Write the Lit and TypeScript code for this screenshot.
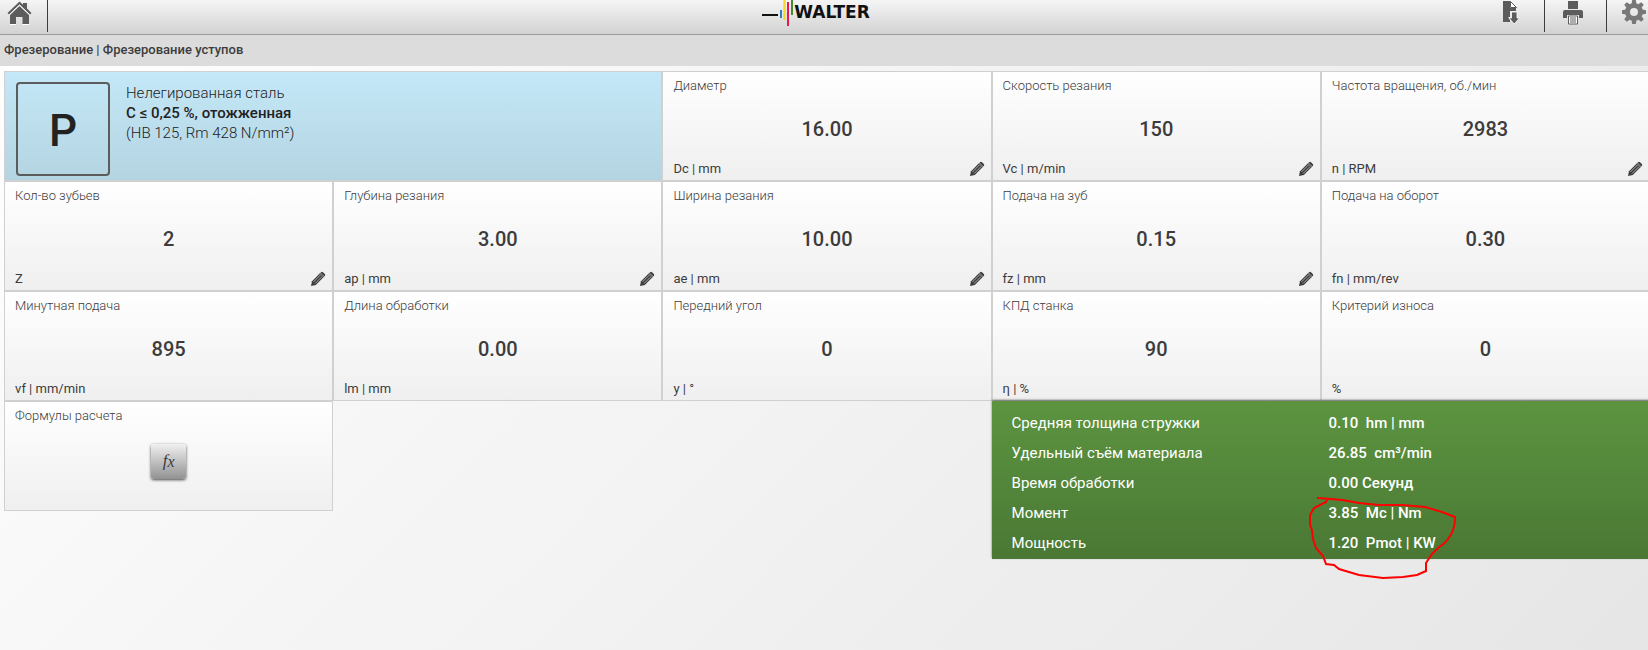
import { LitElement, html, svg, css, nothing } from "lit";
import { customElement, property } from "lit/decorators.js";

interface Param {
  id: string;
  label: string;
  value: string;
  unit: string;
  editable: boolean;
}

const params: Param[] = [
  { id: "dc", label: "Диаметр", value: "16.00", unit: "Dc | mm", editable: true },
  { id: "vc", label: "Скорость резания", value: "150", unit: "Vc | m/min", editable: true },
  { id: "n", label: "Частота вращения, об./мин", value: "2983", unit: "n | RPM", editable: true },
  { id: "z", label: "Кол-во зубьев", value: "2", unit: "Z", editable: true },
  { id: "ap", label: "Глубина резания", value: "3.00", unit: "ap | mm", editable: true },
  { id: "ae", label: "Ширина резания", value: "10.00", unit: "ae | mm", editable: true },
  { id: "fz", label: "Подача на зуб", value: "0.15", unit: "fz | mm", editable: true },
  { id: "fn", label: "Подача на оборот", value: "0.30", unit: "fn | mm/rev", editable: false },
  { id: "vf", label: "Минутная подача", value: "895", unit: "vf | mm/min", editable: false },
  { id: "lm", label: "Длина обработки", value: "0.00", unit: "lm | mm", editable: false },
  { id: "y", label: "Передний угол", value: "0", unit: "y | °", editable: false },
  { id: "eta", label: "КПД станка", value: "90", unit: "η | %", editable: false },
  { id: "wear", label: "Критерий износа", value: "0", unit: "%", editable: false },
];

const results: [string, string, string][] = [
  ["Средняя толщина стружки", "0.10", "\u00a0hm | mm"],
  ["Удельный съём материала", "26.85", "\u00a0cm³/min"],
  ["Время обработки", "0.00", "Секунд"],
  ["Момент", "3.85", "\u00a0Mc | Nm"],
  ["Мощность", "1.20", "\u00a0Pmot | KW"],
];

const pencil = svg`<svg width="16" height="16" viewBox="0 0 16 16" aria-hidden="true">
  <path d="M1 15 L2 10.2 L10.2 2 L14 5.8 L5.8 14 Z" fill="#3c3c3c"/>
  <path d="M11 1.2 Q12 .3 13 1.2 L14.8 3 Q15.7 4 14.8 5 L14.3 5.5 L10.5 1.7 Z" fill="#3c3c3c"/>
  <path d="M3.4 11 L10.4 4 M5 12.600 L12 5.600" stroke="#c8c8c8" stroke-width=".8"/>
  <path d="M9.6 2.8 L13.2 6.4" stroke="#a0a0a0" stroke-width=".6"/>
</svg>`;

@customElement("param-tile")
export class ParamTile extends LitElement {
  @property({ attribute: false }) param!: Param;

  static styles = css`
    :host {
      display: flex;
      flex-direction: column;
      box-sizing: border-box;
      height: 110px;
      padding: 5px 6px 2px 10px;
      border: 1px solid #d0d0d0;
      background: linear-gradient(#ffffff, #efefef);
      color: #3c3c3c;
    }
    .label {
      font-size: 13px;
      line-height: 18px;
      font-weight: 300;
    }
    .value {
      margin: 22px 4px 19px 0;
      font-size: 20px;
      line-height: 24px;
      font-weight: 500;
      text-align: center;
    }
    .foot {
      display: flex;
      justify-content: space-between;
      align-items: center;
      font-size: 13px;
      line-height: 18px;
    }
    .edit {
      display: flex;
      padding: 0;
      border: 0;
      background: none;
      cursor: pointer;
    }
  `;

  render() {
    const p = this.param;
    return html`
      <label class="label" for=${p.id}>${p.label}</label>
      <output class="value" id=${p.id}>${p.value}</output>
      <div class="foot">
        <span>${p.unit}</span>
        ${p.editable
          ? html`<button class="edit" type="button" aria-label=${p.label}>${pencil}</button>`
          : nothing}
      </div>
    `;
  }
}

@customElement("app-root")
export class AppRoot extends LitElement {
  static styles = css`
    :host {
      display: block;
      min-height: 100vh;
      overflow: hidden;
      background: linear-gradient(135deg, #ffffff, #e6e6e6);
      font-family: Roboto, "Noto Sans", sans-serif;
      color: #3c3c3c;
    }
    .top {
      display: grid;
      grid-template-columns: 1fr auto 1fr;
      height: 34px;
      border-bottom: 1px solid #999b99;
      background: linear-gradient(#f5f5f5, #d2d2d2);
    }
    .nav {
      display: flex;
      align-items: flex-start;
    }
    .tools {
      display: flex;
      justify-content: flex-end;
      align-items: flex-start;
      margin-right: -19px;
    }
    .tool {
      box-sizing: border-box;
      display: flex;
      justify-content: center;
      width: 62px;
      height: 32px;
      padding: 0 6px 0 0;
      border: 0;
      border-right: 1px solid #3c3c3c;
      background: none;
      cursor: pointer;
    }
    .home {
      width: 48px;
      padding-right: 10px;
    }
    .last {
      width: 60px;
      border-right: 0;
    }
    .logo {
      display: flex;
      align-items: flex-start;
      padding-right: 16px;
    }
    .word {
      font: bold 17px/24px "DejaVu Sans", sans-serif;
      color: #111111;
    }
    .crumbs {
      height: 31px;
      padding-left: 4px;
      background: #dcdcdc;
      font-size: 13px;
      line-height: 29px;
      font-weight: 500;
    }
    .grid {
      display: grid;
      grid-template-columns: repeat(5, 1fr);
      margin: 5px -2px 0 4px;
    }
    .material {
      grid-column: span 2;
      box-sizing: border-box;
      display: flex;
      gap: 16px;
      height: 110px;
      padding: 10px 11px 4px;
      border: 1px solid #d0d0d0;
      background: linear-gradient(#c4e8f8, #b4d4e1);
      color: #222222;
    }
    .iso {
      box-sizing: border-box;
      width: 94px;
      height: 94px;
      border: 2px solid #5c5c5c;
      border-radius: 4px;
      font-size: 44px;
      line-height: 94px;
      font-weight: 500;
      text-align: center;
    }
    .desc {
      padding-top: 1px;
      font-size: 15px;
      line-height: 20px;
      font-weight: 300;
    }
    .desc p {
      margin: 0;
    }
    .desc .grade {
      font-weight: 500;
    }
    .formulas {
      box-sizing: border-box;
      display: flex;
      flex-direction: column;
      height: 110px;
      padding: 5px 10px;
      border: 1px solid #d0d0d0;
      background: linear-gradient(#ffffff, #efefef);
      font-size: 13px;
      line-height: 18px;
      font-weight: 300;
    }
    .fx {
      align-self: center;
      width: 35px;
      height: 35px;
      margin-top: 19px;
      padding: 0 0 2px;
      border: 0;
      border-radius: 3px;
      background: linear-gradient(#f0f0f0, #929292);
      box-shadow: 0 1px 3px #444444;
      font: italic 17px/24px "Liberation Serif", serif;
      color: #3c3c3c;
      cursor: pointer;
    }
    .fx sub {
      font-size: 16px;
      line-height: 16px;
      vertical-align: -1px;
    }
    .results {
      grid-column: 4 / span 2;
      box-sizing: border-box;
      height: 158px;
      position: relative;
      padding: 7px 20px;
      background: linear-gradient(#5c9440, #4a7834);
      box-shadow: 0 -1px 2px #666666;
      color: #ffffff;
      font-size: 15px;
      line-height: 30px;
    }
    .results dl {
      display: grid;
      grid-template-columns: 317px 1fr;
      margin: 0;
    }
    .results dd {
      margin: 0;
      font-weight: 500;
    }
    .mark {
      position: absolute;
      left: 315px;
      top: 92px;
    }
  `;

  render() {
    return html`
      <header class="top">
        <nav class="nav">
          <button class="tool home" type="button" aria-label="Home">
            <svg width="26" height="26" viewBox="0 1 26 26">
              <path d="M1.5 14 L13.5 2.5 L17 5.8 V4 H21 V9.6 L25.5 14 L24 15.5 L13.5 5.5 L3 15.5 Z" fill="#5c5c5c"/>
              <path d="M3.2 16 L13.5 6.2 L23.8 16" fill="none" stroke="#fff" stroke-width="1"/>
              <path d="M13.5 7 L23 16 V25 H16.5 V18 H10 V25 H4 V16 Z" fill="#5c5c5c"/>
              <path d="M4 25.5 H10 M16.5 25.5 H23" stroke="#fff"/>
            </svg>
          </button>
        </nav>
        <div class="logo">
          <svg width="32" height="26" viewBox="0 0 32 26" aria-hidden="true">
            <path d="M0 15h16" stroke="#111" stroke-width="2"/>
            <path d="M19 10v8" stroke="#2a82be" stroke-width="2"/>
            <path d="M22.5 0v20" stroke="#f5d72d" stroke-width="2.4"/>
            <path d="M26 2v24" stroke="#e61950" stroke-width="2"/>
            <path d="M30 0v15" stroke="#4b8a2b" stroke-width="2"/>
          </svg>
          <span class="word">WALTER</span>
        </div>
        <div class="tools">
          <button class="tool" type="button" aria-label="Export">
            <svg width="20" height="26" viewBox="0 0 20 26">
              <path d="M2 1 H9 V8 H15 V11 H9 V17 H7 L9 20 V22 H2 Z" fill="#5c5c5c"/>
              <path d="M9.5 1.5 L15.5 7.5 H9.5 Z" fill="#fff" stroke="#5c5c5c"/>
              <path d="M10.5 12 H16 V18 H18.5 L13.2 24 L8 18 H10.5 Z" fill="#5c5c5c" stroke="#fff" stroke-width=".8"/>
            </svg>
          </button>
          <button class="tool" type="button" aria-label="Print">
            <svg width="24" height="26" viewBox="0 0 24 26">
              <path d="M7 1 H17 V9 H7 Z M4 10 H20 Q22 10 22 12 V18 H18 V15 H6 V18 H2 V12 Q2 10 4 10 Z" fill="#5c5c5c"/>
              <path d="M7.5 16 H16.5 V24 H7.5 Z M9 18 H15 M9 20 H15 M9 22 H15" fill="#fff" stroke="#5c5c5c"/>
            </svg>
          </button>
          <button class="tool last" type="button" aria-label="Settings">
            <svg width="26" height="26" viewBox="-13 -12 26 26">
              <circle r="6.5" fill="none" stroke="#787878" stroke-width="5"/>
              ${[0, 45, 90, 135, 180, 225, 270, 315].map(
                (a) => svg`<path d="M-2.5 -8 L-1.8 -12 H1.8 L2.5 -8 Z" fill="#787878" transform="rotate(${a})"/>`
              )}
            </svg>
          </button>
        </div>
      </header>
      <div class="crumbs">Фрезерование | Фрезерование уступов</div>
      <main class="grid">
        <section class="material">
          <div class="iso">P</div>
          <div class="desc">
            <p>Нелегированная сталь</p>
            <p class="grade">C ≤ 0,25 %, отожженная</p>
            <p>(HB 125, Rm 428 N/mm²)</p>
          </div>
        </section>
        ${params.map((p) => html`<param-tile .param=${p}></param-tile>`)}
        <section class="formulas">
          <span>Формулы расчета</span>
          <button class="fx" type="button" aria-label="Формулы расчета">f<sub>x</sub></button>
        </section>
        <section class="results">
          <dl>
            ${results.map(([name, value, unit]) => html`<dt>${name}</dt><dd>${value} ${unit}</dd>`)}
          </dl>
          <svg class="mark" width="150" height="90" viewBox="0 0 150 90" fill="none" stroke="#f00" stroke-width="2" aria-hidden="true">
            <path d="M10 5 L24 6 L35 7 L52 10 L72 12 L95 12 L118 14 L135 19 L148 24 Q148 36 143 43 Q139 50 132 54 L125 61 L119 70 V78 L110 82 L96 84 L76 85 L52 82 L32 76 L27 72 L19 71 L16 63 L9 55 L6 46 L5 38 L3 31 V22 L7 15 L19 9 L21 5"/>
          </svg>
        </section>
      </main>
    `;
  }
}
